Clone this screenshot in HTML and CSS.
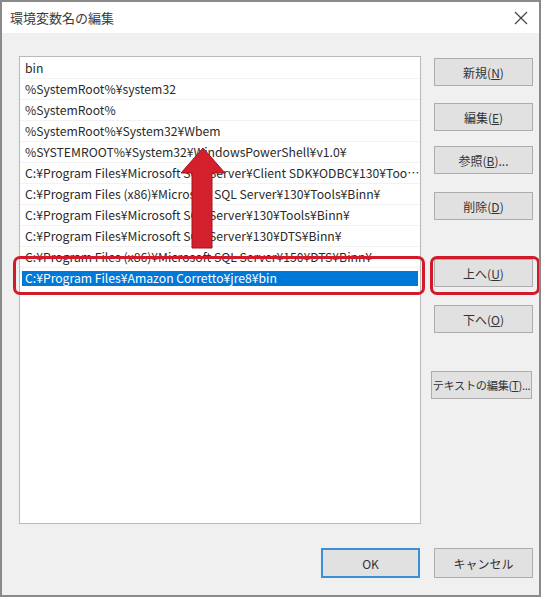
FILE: index.html
```html
<!DOCTYPE html>
<html lang="ja">
<head>
<meta charset="utf-8">
<title>環境変数名の編集</title>
<link rel="stylesheet" href="styles.css">
</head>
<body>
<div class="window">
  <div class="titlebar">
    <span class="title">環境変数名の編集</span>
    <svg class="close" width="14" height="14" viewBox="0 0 14 14"><path d="M1 1L13 13M13 1L1 13" stroke="#444" stroke-width="1.2" fill="none"/></svg>
  </div>
  <div class="content">
    <div class="main">
      <div class="list">
        <div class="row">bin</div>
        <div class="row">%SystemRoot%¥system32</div>
        <div class="row">%SystemRoot%</div>
        <div class="row">%SystemRoot%¥System32¥Wbem</div>
        <div class="row">%SYSTEMROOT%¥System32¥WindowsPowerShell¥v1.0¥</div>
        <div class="row">C:¥Program Files¥Microsoft SQL Server¥Client SDK¥ODBC¥130¥Tools¥Binn¥</div>
        <div class="row">C:¥Program Files (x86)¥Microsoft SQL Server¥130¥Tools¥Binn¥</div>
        <div class="row">C:¥Program Files¥Microsoft SQL Server¥130¥Tools¥Binn¥</div>
        <div class="row">C:¥Program Files¥Microsoft SQL Server¥130¥DTS¥Binn¥</div>
        <div class="row">C:¥Program Files (x86)¥Microsoft SQL Server¥150¥DTS¥Binn¥</div>
        <div class="row row-selected"><span class="sel">C:¥Program Files¥Amazon Corretto¥jre8¥bin</span></div>
      </div>
      <div class="side">
        <button class="btn b-new">新規(<u>N</u>)</button>
        <button class="btn b-edit">編集(<u>E</u>)</button>
        <button class="btn b-browse">参照(<u>B</u>)...</button>
        <button class="btn b-del">削除(<u>D</u>)</button>
        <button class="btn b-up">上へ(<u>U</u>)</button>
        <button class="btn b-down">下へ(<u>O</u>)</button>
        <button class="btn b-text">テキストの編集(<u>T</u>)...</button>
      </div>
    </div>
    <div class="footer">
      <button class="btn btn-ok">OK</button>
      <button class="btn">キャンセル</button>
    </div>
  </div>

  <div class="mark mark-row"></div>
  <div class="mark mark-btn"></div>
  <svg class="arrow" width="60" height="110" viewBox="0 0 60 110">
    <polygon points="23,2 1,27 12,27 12,102 32,102 32,27 45,27" fill="#d41f2c" stroke="#9e1620" stroke-width="1"/>
  </svg>
</div>
</body>
</html>
```

FILE: styles.css
```css
* { box-sizing: border-box; }
html, body { margin: 0; padding: 0; background: #ffffff; }
body {
  font-family: "Noto Sans CJK JP", "Noto Sans", sans-serif;
  color: #222;
}
.window {
  position: relative;
  width: 541px;
  height: 597px;
  border: 2px solid #8a8a8a;
  background: #f0f0f0;
  display: flex;
  flex-direction: column;
  overflow: hidden;
}
.titlebar {
  height: 31px;
  background: #ffffff;
  display: flex;
  align-items: center;
  justify-content: space-between;
  padding: 0 11px 0 8px;
}
.title { font-size: 13px; color: #3a3a3a; }
.close { display: block; }
.content {
  flex: 1;
  display: flex;
  flex-direction: column;
  padding: 23px 6px 0 17px;
}
.main { display: flex; gap: 13px; }
.list {
  width: 402px;
  height: 468px;
  background: #ffffff;
  border: 1px solid #b9b9b9;
  padding-top: 1px;
  overflow: hidden;
}
.row {
  height: 21px;
  line-height: 20px;
  font-size: 12.2px;
  padding-left: 5px;
  border-bottom: 1px solid #f2f2f2;
  white-space: nowrap;
  overflow: hidden;
  text-overflow: ellipsis;
  color: #2a2a2a;
}
.row-selected { padding: 3px 2px 0 2px; border-bottom: none; }
.sel {
  display: block;
  height: 15px;
  line-height: 15px;
  background: #0078d7;
  color: #ffffff;
  padding-left: 3px;
}
.side { display: flex; flex-direction: column; }
.btn {
  width: 99px;
  height: 28px;
  background: #e1e1e1;
  border: 1px solid #adadad;
  font-family: "Noto Sans CJK JP", "Noto Sans", sans-serif;
  font-size: 12px;
  color: #333;
  padding: 0;
  white-space: nowrap;
  overflow: hidden;
}
.btn u { text-decoration: underline; }
.b-new { margin-top: 2px; }
.b-edit { margin-top: 17px; }
.b-browse { margin-top: 15px; }
.b-del { margin-top: 18px; }
.b-up { margin-top: 39px; }
.b-down { margin-top: 18px; }
.b-text { margin-top: 38px; width: 101px; margin-left: -3px; font-size: 11.2px; letter-spacing: -0.3px; }
.footer {
  display: flex;
  justify-content: flex-end;
  gap: 14px;
  margin-top: 24px;
  padding-right: 0;
}
.footer .btn { height: 30px; }
.btn-ok { border: 2px solid #3c8fd6; }
.mark {
  position: absolute;
  border: 3px solid #d11a2a;
  border-radius: 7px;
}
.mark-row { left: 11px; top: 254px; width: 412px; height: 39px; }
.mark-btn { left: 428px; top: 254px; width: 110px; height: 39px; }
.arrow { position: absolute; left: 178px; top: 144px; }
```
